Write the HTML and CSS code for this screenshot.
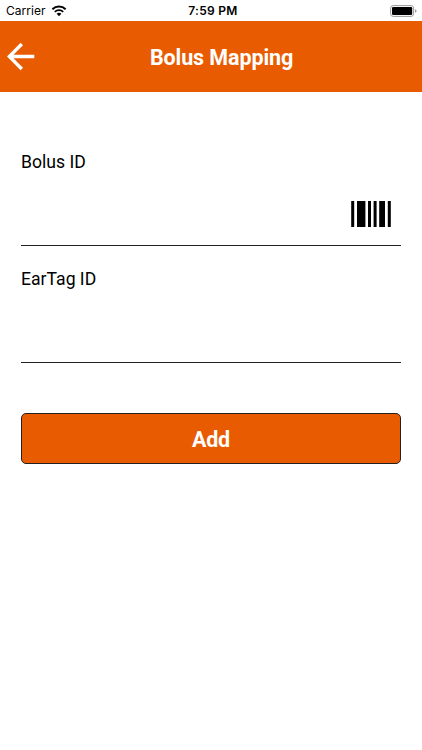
FILE: index.html
```html
<!DOCTYPE html>
<html lang="en">
<head>
    <meta charset="UTF-8">
    <meta name="viewport" content="width=device-width, initial-scale=1.0">
    <title>Bolus Mapping</title>
    <link rel="stylesheet" href="styles.css">
</head>
<body>

    <!-- Status bar -->
    <div class="status-bar">
        <div class="carrier">
            <span>Carrier</span>
            <svg class="wifi" width="16" height="12" viewBox="0 0 16 12">
                <path d="M1.4 4.2 A9.4 9.4 0 0 1 14.6 4.2" fill="none" stroke="#000" stroke-width="2"/>
                <path d="M3.8 6.9 A6 6 0 0 1 12.2 6.9" fill="none" stroke="#000" stroke-width="1.8"/>
                <path d="M5.6 8.8 A3.6 3.6 0 0 1 10.4 8.8 L8 11.2 Z"/>
            </svg>
        </div>
        <span class="time">7:59 PM</span>
        <div class="battery">
            <svg width="27" height="12" viewBox="0 0 27 12">
                <rect x="0.6" y="0.6" width="23" height="10.8" rx="2.6" fill="#fff" stroke="#999"/>
                <rect x="2" y="2" width="20.2" height="8" rx="1.2"/>
                <path d="M25 4.2 Q26.6 4.8 26.6 6 Q26.6 7.2 25 7.8 Z" fill="#999"/>
            </svg>
        </div>
    </div>

    <header class="header">
        <button class="back-button" aria-label="Back">
            <svg width="28" height="28" viewBox="0 0 28 28">
                <path d="M27.3 13.5 H3 M14.8 1 L2.3 13.5 L14.8 26" fill="none" stroke="#fff" stroke-width="3.4"/>
            </svg>
        </button>
        <h1>Bolus Mapping</h1>
    </header>

    <form class="mapping-form">
        <label for="bolus-id">Bolus ID</label>
        <div class="field">
            <input type="text" id="bolus-id">
            <svg class="barcode" width="40" height="26" viewBox="0 0 40 26">
                <rect x="0.2" width="3" height="26"/>
                <rect x="6" width="8.4" height="26"/>
                <rect x="17" width="3" height="26"/>
                <rect x="22.6" width="3" height="26"/>
                <rect x="28.2" width="5.8" height="26"/>
                <rect x="36.8" width="3" height="26"/>
            </svg>
        </div>

        <label for="eartag-id">EarTag ID</label>
        <div class="field">
            <input type="text" id="eartag-id">
        </div>

        <button type="button" class="add-button">Add</button>
    </form>

</body>
</html>
```
FILE: styles.css
```css
* {
    box-sizing: border-box;
}

body {
    font-family: Roboto, Arial, sans-serif;
    margin: 0;
    background-color: white;
    color: black;
}

.status-bar {
    display: grid;
    grid-template-columns: 1fr auto 1fr;
    align-items: center;
    height: 21px;
    padding: 0 5px 0 6px;
    font-family: Inter, sans-serif;
    font-size: 12px;
}

.carrier {
    display: flex;
    align-items: center;
    gap: 5px;
    letter-spacing: 0.05px;
}

.time {
    padding-left: 3px;
    font-weight: 600;
    letter-spacing: 0.3px;
}

.battery {
    display: flex;
    justify-content: flex-end;
}

.header {
    display: grid;
    grid-template-columns: 42px 1fr 21px;
    align-items: center;
    height: 71px;
    background-color: #E95B00;
    color: white;
}

.header h1 {
    margin: 0;
    padding-top: 1px;
    font-size: 21.5px;
    font-weight: bold;
    letter-spacing: -0.1px;
    text-align: center;
}

.back-button {
    display: flex;
    padding: 0 0 0 7px;
    background: none;
    border: none;
}

.mapping-form {
    display: flex;
    flex-direction: column;
    padding: 58px 21px 0 21px;
}

.mapping-form label {
    height: 22px;
    font-size: 17.6px;
    line-height: 24px;
}

.field {
    display: flex;
    align-items: center;
    height: 74px;
    margin-bottom: 21px;
    padding-right: 10px;
    border-bottom: 1px solid #222;
}

.field input {
    flex: 1;
    min-width: 0;
    height: 50px;
    padding: 0;
    border: none;
    outline: none;
    font-size: 18px;
}

.barcode {
    margin-top: 10px;
}

.add-button {
    height: 51px;
    margin-top: 29px;
    padding-top: 3px;
    background-color: #E95B00;
    color: white;
    border: 1px solid #222;
    border-radius: 5px;
    font-family: inherit;
    font-size: 21.5px;
    font-weight: bold;
    letter-spacing: -0.2px;
}
```
